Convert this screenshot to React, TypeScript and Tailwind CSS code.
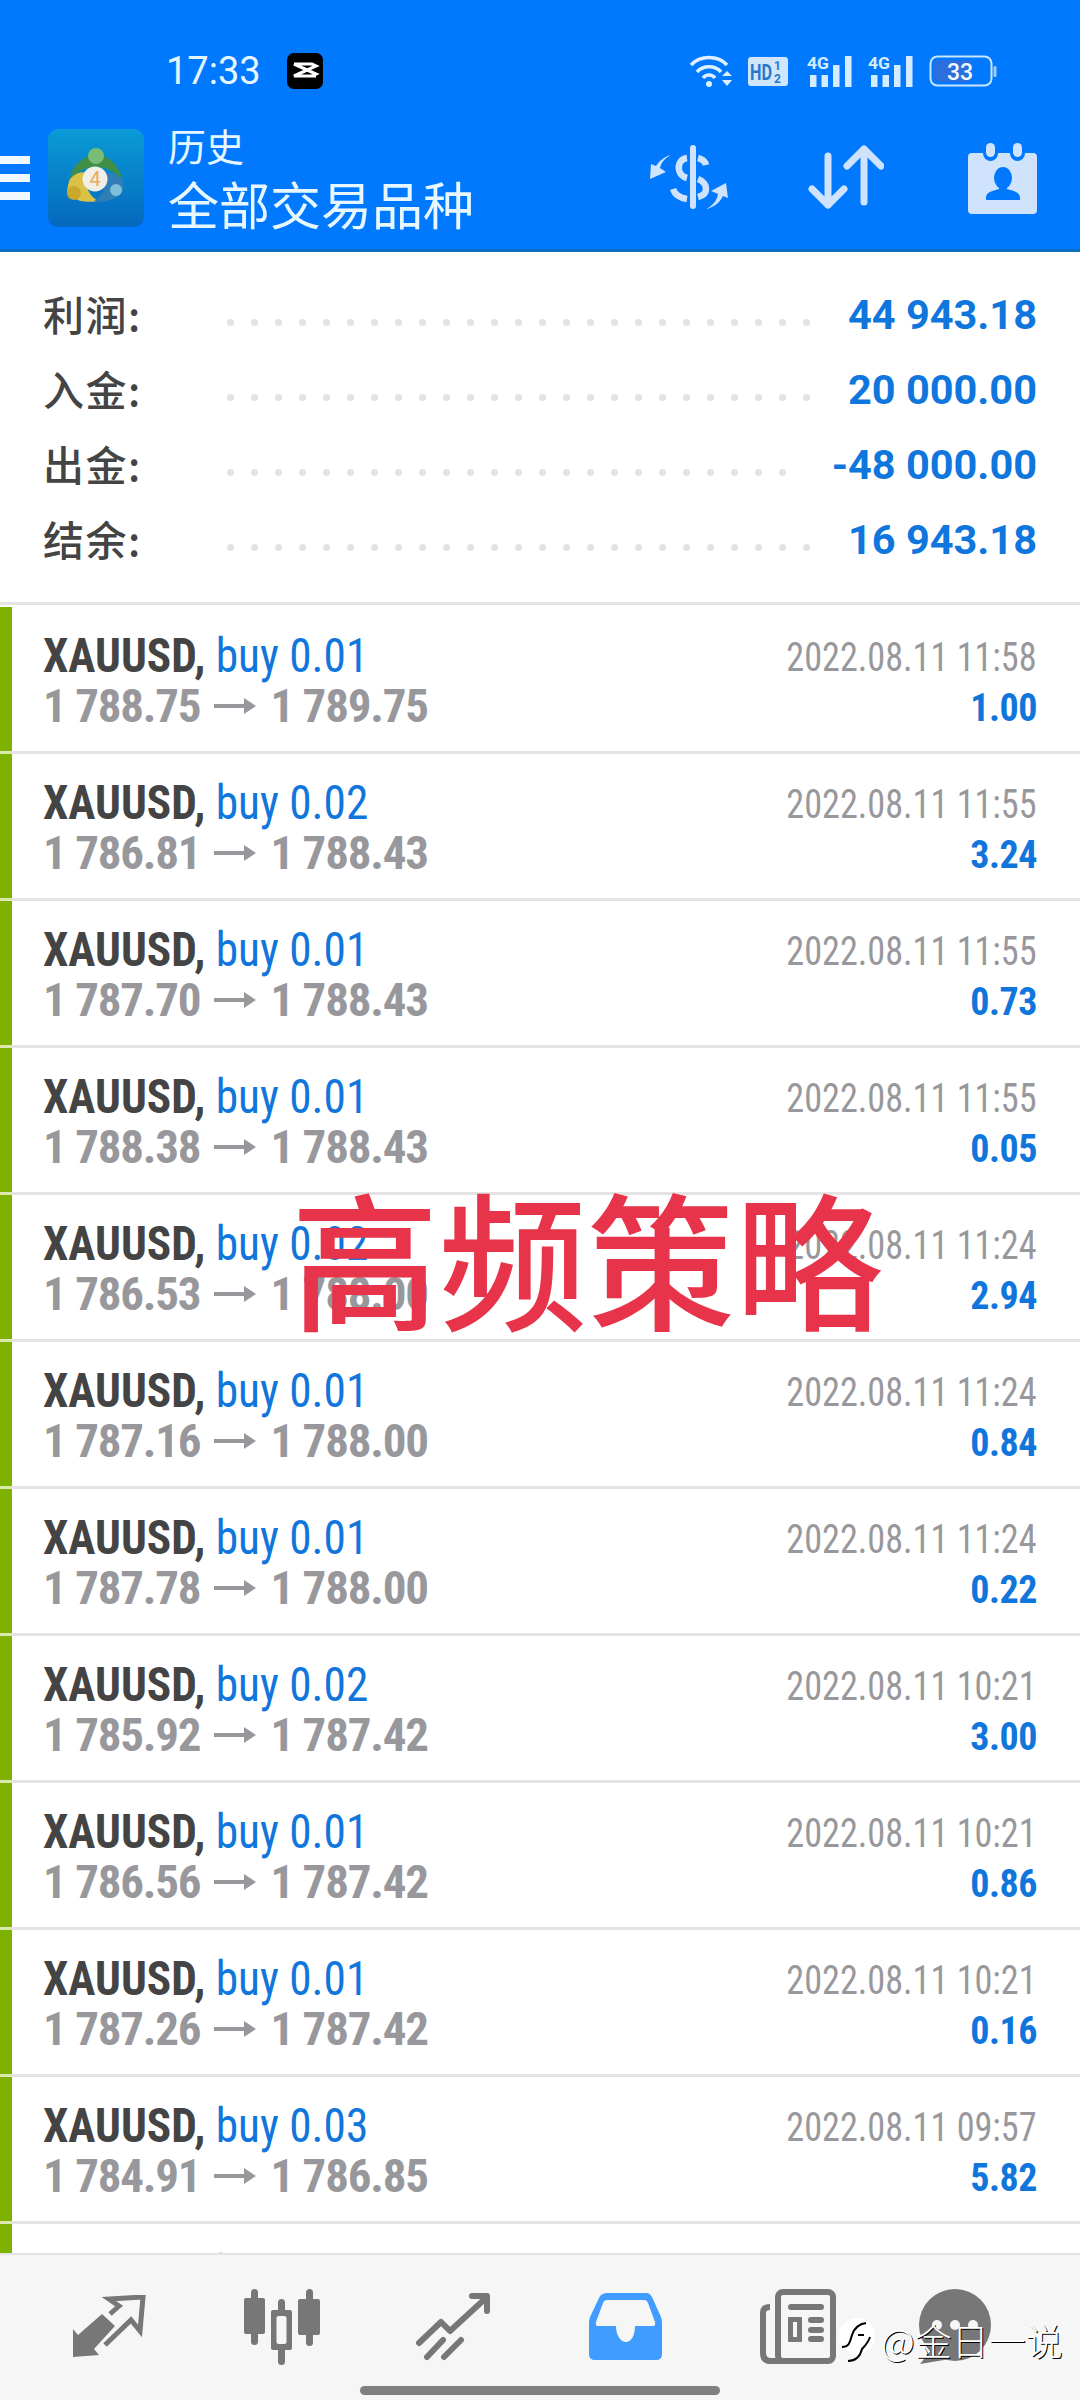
import React from "react";

const rows = [
  ["0.01", "1 788.75", "1 789.75", "2022.08.11 11:58", "1.00"],
  ["0.02", "1 786.81", "1 788.43", "2022.08.11 11:55", "3.24"],
  ["0.01", "1 787.70", "1 788.43", "2022.08.11 11:55", "0.73"],
  ["0.01", "1 788.38", "1 788.43", "2022.08.11 11:55", "0.05"],
  ["0.02", "1 786.53", "1 788.00", "2022.08.11 11:24", "2.94"],
  ["0.01", "1 787.16", "1 788.00", "2022.08.11 11:24", "0.84"],
  ["0.01", "1 787.78", "1 788.00", "2022.08.11 11:24", "0.22"],
  ["0.02", "1 785.92", "1 787.42", "2022.08.11 10:21", "3.00"],
  ["0.01", "1 786.56", "1 787.42", "2022.08.11 10:21", "0.86"],
  ["0.01", "1 787.26", "1 787.42", "2022.08.11 10:21", "0.16"],
  ["0.03", "1 784.91", "1 786.85", "2022.08.11 09:57", "5.82"],
  ["0.01", "1 784.91", "1 786.85", "2022.08.11 09:57", "1.94"],
];

const summary = [
  ["利润", "44 943.18", 25],
  ["入金", "20 000.00", 25],
  ["出金", "-48 000.00", 24],
  ["结余", "16 943.18", 25],
] as const;

const ICON = "#cfe3fd";
const BLUE = "#0079fe";
const GRAY = "#777777";

function Logo() {
  return (
    <svg width="96" height="98" viewBox="0 0 96 98" className="shrink-0">
      <defs>
        <linearGradient id="lg" x1="0" y1="0" x2="0" y2="1">
          <stop offset="0" stopColor="#0a9bd6" />
          <stop offset="1" stopColor="#0568bd" />
        </linearGradient>
      </defs>
      <rect width="96" height="98" rx="10" fill="url(#lg)" />
      <path d="M22 50C24 36 34 30 41 27C44 33 52 33 56 27C64 31 72 38 74 50C66 42 58 38 48 38C38 38 30 42 22 50Z" fill="#3f8f46" />
      <circle cx="48" cy="27" r="8" fill="#79bd74" />
      <path d="M22 50C30 42 36 42 42 46C36 54 38 64 50 72C40 74 30 72 28 70C24 67 20 66 19 62C20 58 20 54 22 50Z" fill="#d9c245" />
      <circle cx="26" cy="64" r="7" fill="#c9a92c" />
      <path d="M74 50C68 44 62 42 56 46C60 56 56 66 46 72C56 74 68 70 72 66C76 62 76 56 74 50Z" fill="#2f7fb6" />
      <circle cx="68" cy="61" r="6" fill="#7dbfd9" />
      <circle cx="47" cy="50" r="12.500" fill="#f0eee6" />
      <text x="47" y="57" textAnchor="middle" fontSize="20" fill="#eda95a" fontFamily="Roboto, sans-serif">4</text>
    </svg>
  );
}

function CapCut() {
  return (
    <svg width="36" height="36" viewBox="0 0 36 36">
      <rect width="36" height="36" rx="7" fill="#000" />
      <path d="M7 11h18l4 2-22 10h22M7 11l22 10-4 2H7" stroke="#fff" strokeWidth="3.2" fill="none" />
    </svg>
  );
}

function Wifi() {
  return (
    <svg width="44" height="34" viewBox="0 0 44 34" fill="none" stroke="#def0ff" strokeWidth="3.6">
      <path d="M2 11C11 1 29 1 38 11" />
      <path d="M8 18C14 11 26 11 32 18" />
      <path d="M14 24C17 20 23 20 26 24" />
      <circle cx="20" cy="30" r="3" fill="#def0ff" stroke="none" />
      <path d="M33 22l5-5 5 5zM33 26l5 6 5-6z" fill="#def0ff" stroke="none" />
    </svg>
  );
}

function HD() {
  return (
    <svg width="40" height="29" viewBox="0 0 40 29">
      <rect width="40" height="29" rx="3" fill="#cfe6ff" />
      <text x="2" y="23" fontSize="22" fontWeight="700" fill="#2a78c8" fontFamily="Roboto, sans-serif" textLength="22" lengthAdjust="spacingAndGlyphs">HD</text>
      <text x="26" y="13" fontSize="12" fontWeight="700" fill="#2a78c8" fontFamily="Roboto, sans-serif">1</text>
      <text x="26" y="26" fontSize="12" fontWeight="700" fill="#2a78c8" fontFamily="Roboto, sans-serif">2</text>
    </svg>
  );
}

function Signal() {
  return (
    <svg width="46" height="32" viewBox="0 0 46 32" fill="#d5ecff">
      <text x="0" y="14" fontSize="17" fontWeight="700" fontFamily="Roboto, sans-serif" textLength="22" lengthAdjust="spacingAndGlyphs">4G</text>
      <rect x="3" y="20" width="6.5" height="12" />
      <rect x="14.500" y="20" width="6.5" height="12" />
      <rect x="26" y="10" width="6.500" height="22" />
      <rect x="38" y="1" width="6.500" height="31" />
    </svg>
  );
}

function Battery() {
  return (
    <svg width="68" height="32" viewBox="0 0 68 32">
      <rect x="1.500" y="1.500" width="61" height="29" rx="7" fill="none" stroke="#c9e6ff" strokeWidth="2" />
      <rect x="5" y="5" width="37" height="22" rx="4" fill="#2a6ee0" />
      <rect x="64.500" y="11" width="3" height="11" rx="1.500" fill="#9fcdf5" />
      <text x="31" y="25" textAnchor="middle" fontSize="23" fontWeight="500" fill="#f4fbff" fontFamily="Roboto, sans-serif">33</text>
    </svg>
  );
}

function DollarIcon() {
  return (
    <svg width="80" height="66" viewBox="0 0 80 66" className="shrink-0">
      <rect x="40" y="0" width="6" height="64" rx="3" fill={ICON} />
      <g fill="none" stroke={ICON} strokeWidth="6.500">
        <path d="M37 13C30 14 28 20 29 25C30 29 33 32 37 33" />
        <path d="M48 13C52 14 55 16 56 20" />
        <path d="M48 34C53 36 56 39 56 44C56 49 52 51 48 52" />
        <path d="M23 44C25 50 30 53 37 54" />
      </g>
      <path d="M21 8C14 12 11 16 10 21L16 25L0 32L1 17L6 19C9 14 14 10 21 8Z" fill={ICON} transform="translate(0,2)" />
      <path d="M58 64C66 60 69 55 70 49L63 46L78 38L80 53L75 51C72 57 67 62 58 64Z" fill={ICON} transform="translate(-2,0)" />
    </svg>
  );
}

function ArrowsIcon() {
  return (
    <svg width="76" height="66" viewBox="0 0 76 66" fill="none" stroke={ICON} strokeWidth="7" strokeLinecap="round" strokeLinejoin="round" className="shrink-0">
      <path d="M20 11V60M4 44L20 60L36 44" />
      <path d="M56 4V57M39 21L56 4L73 21" />
    </svg>
  );
}

function CalendarIcon() {
  return (
    <svg width="69" height="72" viewBox="0 0 69 72" className="shrink-0">
      <rect x="0" y="11" width="69" height="61" rx="4" fill={ICON} />
      <rect x="15" y="-1" width="15" height="20" rx="7.500" fill={BLUE} />
      <rect x="42" y="-1" width="15" height="20" rx="7.500" fill={BLUE} />
      <rect x="18" y="1" width="9" height="14" rx="4.500" fill={ICON} />
      <rect x="45" y="1" width="9" height="14" rx="4.500" fill={ICON} />
      <ellipse cx="35" cy="36" rx="9" ry="11" fill={BLUE} />
      <path d="M31 42V47C24 49 18 50 18 56V58H52V56C52 50 46 49 39 47V42Z" fill={BLUE} />
    </svg>
  );
}

function ExchangeIcon() {
  return (
    <svg width="76" height="64" viewBox="0 0 76 64" className="shrink-0">
      <path d="M1 34L6 40L30 19L43 31L22 54L27 60L1 62Z" fill={GRAY} />
      <path d="M38 19L47 11L37 4L71 2L68 36L59 25L33 50" fill="none" stroke={GRAY} strokeWidth="5" />
    </svg>
  );
}

function CandleIcon() {
  return (
    <svg width="76" height="76" viewBox="0 0 76 76" fill={GRAY} className="shrink-0">
      <rect x="7" y="0" width="7" height="56" rx="3.500" />
      <rect x="0" y="9" width="21" height="36" rx="2" />
      <rect x="34" y="10" width="7" height="66" rx="3.500" />
      <rect x="27" y="21" width="21" height="40" rx="2" />
      <rect x="32.500" y="27" width="10" height="28" rx="2" fill="#f6f6f6" />
      <rect x="62" y="0" width="7" height="57" rx="3.500" />
      <rect x="54" y="10" width="22" height="36" rx="2" />
    </svg>
  );
}

function ChartIcon() {
  return (
    <svg width="76" height="68" viewBox="0 0 76 68" fill="none" stroke={GRAY} strokeWidth="6" strokeLinecap="round" strokeLinejoin="round" className="shrink-0">
      <path d="M3 50L25 29L34 38L71 4" />
      <path d="M56 3H71V18" />
      <path d="M11 64L27 47M28 64L45 47" />
    </svg>
  );
}

function InboxIcon() {
  return (
    <svg width="76" height="68" viewBox="0 0 76 68" className="shrink-0">
      <path d="M20 0H58Q62 0 64 4L73 24Q74 27 74 30V61Q74 67 68 67H7Q1 67 1 61V30Q1 27 2 24L11 5Q13 0 20 0Z" fill="#409cff" />
      <path d="M19 7H56Q59 7 60 10L67 29Q68 33 65 33H47C47 43 43 49 38 49C33 49 28 43 28 33H10Q7 33 8 29L15 10Q16 7 19 7Z" fill="#f6f6f6" />
    </svg>
  );
}

function NewsIcon() {
  return (
    <svg width="76" height="76" viewBox="0 0 76 76" className="shrink-0">
      <g fill="none" stroke={GRAY} strokeWidth="6">
        <rect x="18" y="3" width="55" height="69" rx="5" />
        <path d="M10 18Q3 18 3 24V64Q3 72 11 72H28" />
      </g>
      <rect x="28" y="15" width="36" height="6" rx="3" fill={GRAY} />
      <rect x="28" y="28" width="14" height="25" rx="1" fill={GRAY} />
      <rect x="33" y="33" width="4" height="15" fill="#f6f6f6" />
      <rect x="48" y="28" width="16" height="6" rx="3" fill={GRAY} />
      <rect x="48" y="38" width="16" height="6" rx="3" fill={GRAY} />
      <rect x="48" y="47" width="16" height="6" rx="3" fill={GRAY} />
    </svg>
  );
}

function ChatIcon() {
  return (
    <svg width="74" height="76" viewBox="0 0 74 76" className="shrink-0">
      <circle cx="37" cy="36" r="36" fill={GRAY} />
      <path d="M14 60L2 75L32 70Z" fill={GRAY} />
      <circle cx="19" cy="36" r="5" fill="#f6f6f6" />
      <circle cx="37" cy="36" r="5" fill="#f6f6f6" />
      <circle cx="55" cy="36" r="5" fill="#f6f6f6" />
    </svg>
  );
}

function PriceArrow() {
  return (
    <svg width="42" height="20" viewBox="0 0 42 20" className="mx-[14px] shrink-0">
      <path d="M0 8H30V2L42 10L30 18V12H0Z" fill="#98989c" />
    </svg>
  );
}

function Row({ r }: { r: string[] }) {
  return (
    <div className="flex h-[147px] shrink-0">
      <div className="w-[12px] shrink-0 border-b-[3px] border-[#dbe8b0] bg-[#7fb100]" />
      <div className="flex flex-1 justify-between border-b-[3px] border-[#e4e4e4] pr-[43px] pl-[31px]">
        <div className="pt-[23px] font-['Roboto'] font-stretch-condensed">
          <div className="origin-left scale-x-[0.925] text-[49px] leading-[51px] whitespace-nowrap">
            <span className="font-bold text-[#444444]">XAUUSD,</span>
            <span className="text-[#1176dc]"> buy {r[0]}</span>
          </div>
          <div className="flex items-center text-[47px] leading-[50px] font-bold tracking-[-1.2px] whitespace-nowrap text-[#98989c]">
            <span>{r[1]}</span>
            <PriceArrow />
            <span>{r[2]}</span>
          </div>
        </div>
        <div className="pt-[26px] text-right font-['Roboto'] font-stretch-condensed">
          <div className="origin-right scale-x-[0.905] text-[40px] leading-[50px] whitespace-nowrap text-[#98989c]">{r[3]}</div>
          <div className="text-[38px] leading-[51px] font-bold tracking-[-0.5px] text-[#1176dc]">{r[4]}</div>
        </div>
      </div>
    </div>
  );
}

export default function App() {
  return (
    <div className="relative flex h-[2400px] w-[1080px] flex-col overflow-hidden bg-white font-['Roboto','Noto_Sans_CJK_SC',sans-serif]">
      <header className="shrink-0 border-b-[3px] border-[#0a70c2] bg-[#0079fe]">
        <div className="flex h-[120px] items-center pt-[22px] pr-[83px] pl-[166px]">
          <span className="text-[38px] leading-none text-[#e6f6ff]">17:33</span>
          <span className="ml-[26px] flex"><CapCut /></span>
          <div className="ml-auto flex items-center gap-[15px]">
            <Wifi />
            <HD />
            <span className="ml-[4px] flex"><Signal /></span>
            <Signal />
            <Battery />
          </div>
        </div>
        <div className="flex h-[129px] items-center pb-[14px]">
          <div className="flex w-[30px] shrink-0 flex-col gap-[10px]">
            <div className="h-[8px] bg-[#f1f9ff]" />
            <div className="h-[8px] bg-[#f1f9ff]" />
            <div className="h-[8px] bg-[#f1f9ff]" />
          </div>
          <div className="ml-[18px]"><Logo /></div>
          <div className="ml-[24px] font-['Noto_Sans_CJK_SC'] text-[#e6f7ff]">
            <div className="text-[38px] leading-[50px]">历史</div>
            <div className="text-[51px] leading-[66px]">全部交易品种</div>
          </div>
          <div className="ml-auto flex items-center gap-[78px] pr-[43px]">
            <DollarIcon />
            <ArrowsIcon />
            <div className="ml-[6px]"><CalendarIcon /></div>
          </div>
        </div>
      </header>

      <section className="shrink-0 border-b-[3px] border-[#e4e4e4] pt-[26px] pr-[43px] pb-[24px] pl-[43px]">
        {summary.map(([label, value, n]) => (
          <div key={label} className="flex h-[75px] items-center">
            <span className="-mt-[4px] w-[184px] shrink-0 font-['Noto_Sans_CJK_SC'] text-[41px] font-medium tracking-[1.5px] whitespace-nowrap text-[#444444]">
              {label}:
            </span>
            <div className="flex gap-[17px] pt-[14px]">
              {Array.from({ length: n }).map((_, i) => (
                <span key={i} className="h-[7px] w-[7px] rounded-full bg-[#e3e3e3]" />
              ))}
            </div>
            <span className="ml-auto text-[41.5px] font-bold whitespace-nowrap text-[#0f76de]">{value}</span>
          </div>
        ))}
      </section>

      <main className="flex-1 overflow-hidden pt-[2px]">
        {rows.map((r, i) => (
          <Row key={i} r={r} />
        ))}
      </main>

      <nav className="relative flex h-[147px] shrink-0 flex-col border-t-[2px] border-[#e4e4e4] bg-[#f6f6f6]">
        <div className="flex items-center gap-[96px] pt-[34px] pl-[72px]">
          <ExchangeIcon />
          <CandleIcon />
          <ChartIcon />
          <InboxIcon />
          <NewsIcon />
          <div className="-ml-[14px]"><ChatIcon /></div>
        </div>
        <div className="mx-auto mt-[21px] h-[9px] w-[360px] rounded-full bg-[#808080]" />
      </nav>

      <div className="absolute top-[1160px] left-[291px] font-['Noto_Sans_CJK_SC'] text-[148px] leading-[190px] font-medium whitespace-nowrap text-[#e8344a]">
        高频策略
      </div>

      <div className="absolute top-[2315px] left-[838px] flex items-center font-['Noto_Sans_CJK_SC'] text-[37px] leading-[50px] font-light whitespace-nowrap text-white [text-shadow:1px_1px_0_#000]">
        <svg width="38" height="46" viewBox="0 0 38 46" className="mr-[5px]">
          <circle cx="19" cy="19" r="18" fill="#fff" />
          <path d="M4 30c8 0 8-6 10-12c2-6 6-11 14-12M10 44c8 0 12-4 14-12c2-2 6-6 8-12M20 18h6" fill="none" stroke="#000" strokeWidth="2" />
        </svg>
        @金日一说
      </div>
    </div>
  );
}
